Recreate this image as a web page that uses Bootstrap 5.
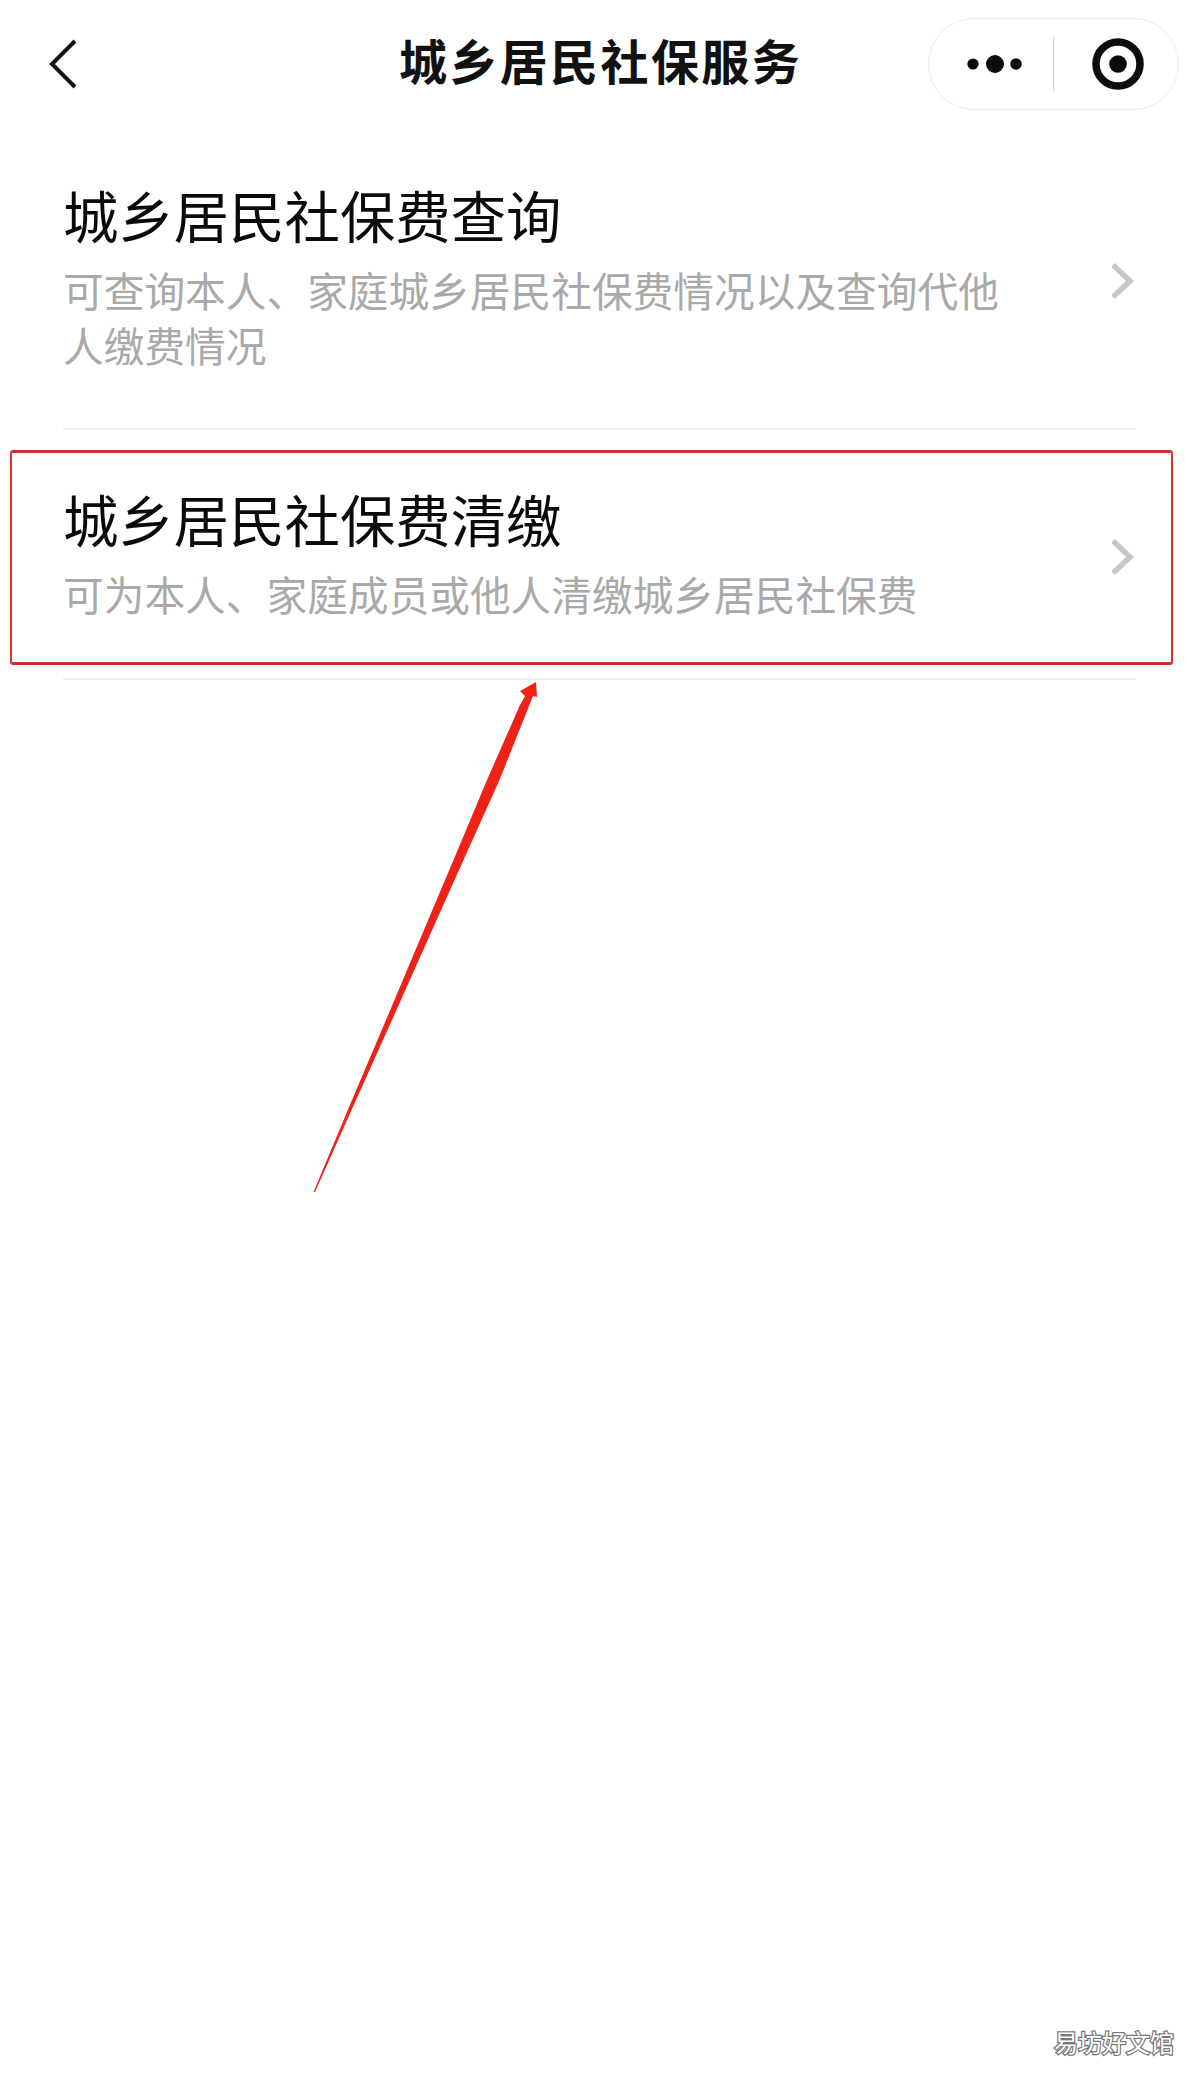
<!DOCTYPE html>
<html lang="zh-CN">
<head>
<meta charset="utf-8">
<title>城乡居民社保服务</title>
<link href="https://cdn.jsdelivr.net/npm/bootstrap@5.3.0/dist/css/bootstrap.min.css" rel="stylesheet">
<style>
body{background:#fff;font-family:"Liberation Sans","Noto Sans CJK SC",sans-serif;color:#0b0b0b}
.page-root{width:1200px}
.top-bar{height:126px;padding:18px 21px 16px 49px}
.back-slot{width:224px}
.bar-title{font-size:48px;line-height:64px;font-weight:700;letter-spacing:2.4px;margin:0;color:#111}
.capsule{width:251px;height:92px;border:1.5px solid #ececec;border-radius:46px}
.capsule-half{width:125px}
.capsule-rule{width:1px;height:54px;background:#cfcfcf}
.dots-ico{margin-left:12px}
.target-ico{margin-left:4px}
.svc-list{margin:0 64px 0 63px}
.svc-list .svc-item{padding:60px 0 53px;border:0;border-bottom:2px solid #eeeeee;border-radius:0;background:transparent}
.list-group-flush>.svc-item:last-child{border-bottom-width:2px}
.svc-name{font-size:55.4px;line-height:66px;margin:0 0 14px;font-weight:400;color:#0a0a0a;white-space:nowrap}
.svc-desc{width:950px;font-size:40.7px;line-height:54.5px;margin:0;color:#a9a9a9}
.red-box{left:-53px;right:-37px;top:20px;bottom:13px;border:2px solid #dc302d;border-top:3px solid #cc302e;border-bottom:3px solid #cc302e;border-radius:3px;pointer-events:none}
.arrow-layer{left:0;top:0;pointer-events:none}
.mark-text{right:26px;bottom:17px;font-size:24px;line-height:29px;color:#fff;-webkit-text-stroke:2.5px #777;paint-order:stroke fill;white-space:nowrap}
</style>
</head>
<body>
<div class="page-root position-relative overflow-hidden min-vh-100">
  <header class="top-bar d-flex align-items-center">
    <div class="back-slot d-flex align-items-center">
      <svg width="28" height="50" viewBox="0 0 28 50" aria-hidden="true"><path d="M26 2 3 25l23 23" fill="none" stroke="#141414" stroke-width="4"/></svg>
    </div>
    <h1 class="bar-title flex-grow-1 text-center">城乡居民社保服务</h1>
    <div class="capsule d-flex align-items-center bg-white">
      <div class="capsule-half d-flex justify-content-center align-items-center">
        <svg class="dots-ico" width="62" height="20" viewBox="0 0 62 20" aria-hidden="true"><circle cx="7" cy="10" r="5.6" fill="#0c0c0c"/><circle cx="29" cy="10" r="9" fill="#0c0c0c"/><circle cx="50" cy="10" r="5.8" fill="#0c0c0c"/></svg>
      </div>
      <div class="capsule-rule"></div>
      <div class="capsule-half d-flex justify-content-center align-items-center">
        <svg class="target-ico" width="52" height="52" viewBox="0 0 52 52" aria-hidden="true"><circle cx="26" cy="26" r="22" fill="none" stroke="#0c0c0c" stroke-width="7.5"/><circle cx="26" cy="26" r="8.8" fill="#0c0c0c"/></svg>
      </div>
    </div>
  </header>

  <div class="svc-list list-group list-group-flush">
    <div class="svc-item list-group-item d-flex justify-content-between align-items-center">
      <div class="svc-body">
        <h2 class="svc-name">城乡居民社保费查询</h2>
        <p class="svc-desc">可查询本人、家庭城乡居民社保费情况以及查询代他人缴费情况</p>
      </div>
      <svg width="24" height="38" viewBox="0 0 24 38" aria-hidden="true"><path d="M1 3l17 16L1 35" fill="none" stroke="#c6c6c8" stroke-width="5.5"/></svg>
    </div>
    <div class="svc-item list-group-item d-flex justify-content-between align-items-center position-relative">
      <div class="svc-body">
        <h2 class="svc-name">城乡居民社保费清缴</h2>
        <p class="svc-desc">可为本人、家庭成员或他人清缴城乡居民社保费</p>
      </div>
      <svg width="24" height="38" viewBox="0 0 24 38" aria-hidden="true"><path d="M1 3l17 16L1 35" fill="none" stroke="#c6c6c8" stroke-width="5.5"/></svg>
      <div class="red-box position-absolute"></div>
    </div>
  </div>

  <svg class="arrow-layer position-absolute" width="1200" height="2075" viewBox="0 0 1200 2075" aria-hidden="true">
    <polygon fill="#ee2318" points="313.5,1192 352,1100 386,1020 419.7,940 453.5,860 487,780 520,705 525,696 520,691 536,682 537,697 533,696 499.5,780 463.5,860 427.7,940 392,1020 356,1100 315,1192"/>
  </svg>

  <div class="mark-text position-absolute">易坊好文馆</div>
</div>
<script src="https://cdn.jsdelivr.net/npm/bootstrap@5.3.0/dist/js/bootstrap.bundle.min.js"></script>
</body>
</html>
